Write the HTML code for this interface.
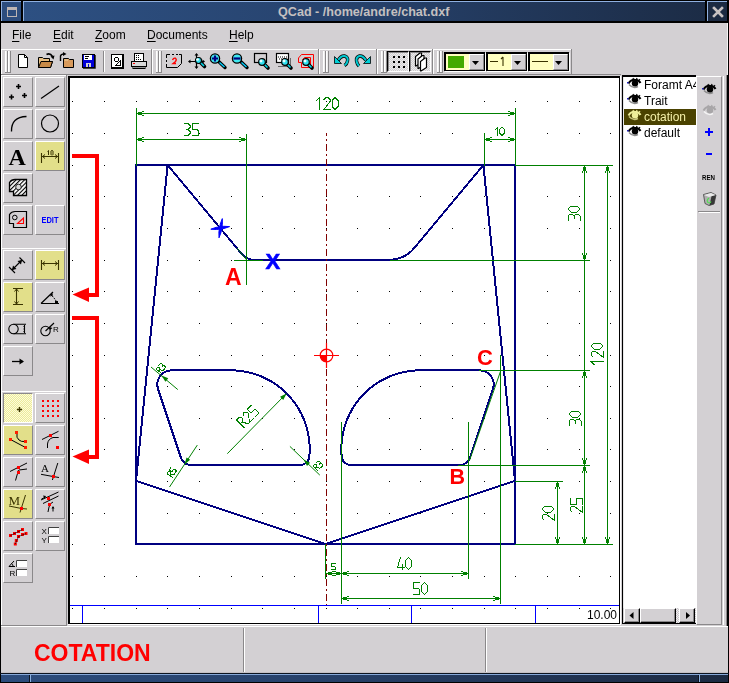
<!DOCTYPE html><html><head><meta charset="utf-8"><style>
html,body{margin:0;padding:0;width:729px;height:683px;overflow:hidden;background:#000}
body>div,body>svg{position:absolute;box-sizing:content-box}
.t{font-family:"Liberation Sans",sans-serif;color:#000;white-space:nowrap;will-change:transform}
u{text-decoration:underline;text-underline-offset:2px}
</style></head><body>
<div style="left:0px;top:0px;width:729px;height:683px;background:#000"></div>
<div style="left:1px;top:23px;width:727px;height:650px;background:#d3d0d3"></div>
<div style="left:1px;top:1px;width:20px;height:20px;background:#2c4d7e;border-top:1px solid #8fb0e0;border-left:1px solid #8fb0e0;box-sizing:border-box"></div>
<div style="left:7px;top:7px;width:10px;height:10px;box-sizing:border-box;border:1px solid #bdb6b4;border-top:3px solid #bdb6b4"></div>
<div style="left:23px;top:1px;width:682px;height:20px;box-sizing:border-box;border-top:1px solid #8fb0e0;border-left:1px solid #8fb0e0;background:linear-gradient(to right,#2d5082,#27436e 45%,#1c2c46)"></div>
<div style="left:278px;top:4px;height:16px;line-height:16px;font:bold 12.6px/16px 'Liberation Sans',sans-serif;color:#c4c0c0;white-space:nowrap">QCad - /home/andre/chat.dxf</div>
<div style="left:707px;top:1px;width:20px;height:20px;box-sizing:border-box;border-top:1px solid #8fb0e0;border-left:1px solid #8fb0e0;background:#1c2a42"></div>
<svg style="left:707px;top:1px" width="21" height="21"><path d="M7 7 L15 15 M15 7 L7 15" stroke="#c8c2c2" stroke-width="2.6" stroke-linecap="square"/></svg>
<div class="t" style="left:12px;top:28px;font-size:12px;line-height:14px"><u>F</u>ile</div>
<div class="t" style="left:53px;top:28px;font-size:12px;line-height:14px"><u>E</u>dit</div>
<div class="t" style="left:95px;top:28px;font-size:12px;line-height:14px"><u>Z</u>oom</div>
<div class="t" style="left:147px;top:28px;font-size:12px;line-height:14px"><u>D</u>ocuments</div>
<div class="t" style="left:229px;top:28px;font-size:12px;line-height:14px"><u>H</u>elp</div>
<div style="left:1px;top:74px;width:620px;height:1px;background:#8a888a"></div>
<div style="left:1px;top:49px;width:150px;height:1px;background:#fff"></div>
<div style="left:1px;top:49px;width:1px;height:25px;background:#fff"></div>
<div style="left:151px;top:49px;width:1px;height:25px;background:#8a888a"></div>
<div style="left:5px;top:51px;width:1px;height:22px;background:#fff"></div>
<div style="left:6px;top:51px;width:1px;height:22px;background:#ecebec"></div>
<div style="left:7px;top:51px;width:1px;height:22px;background:#8a888a"></div>
<div style="left:5px;top:72px;width:3px;height:1px;background:#8a888a"></div>
<div style="left:8px;top:51px;width:1px;height:22px;background:#fff"></div>
<div style="left:9px;top:51px;width:1px;height:22px;background:#ecebec"></div>
<div style="left:10px;top:51px;width:1px;height:22px;background:#8a888a"></div>
<div style="left:8px;top:72px;width:3px;height:1px;background:#8a888a"></div>
<div style="left:152px;top:49px;width:166px;height:1px;background:#fff"></div>
<div style="left:152px;top:49px;width:1px;height:25px;background:#fff"></div>
<div style="left:318px;top:49px;width:1px;height:25px;background:#8a888a"></div>
<div style="left:156px;top:51px;width:1px;height:22px;background:#fff"></div>
<div style="left:157px;top:51px;width:1px;height:22px;background:#ecebec"></div>
<div style="left:158px;top:51px;width:1px;height:22px;background:#8a888a"></div>
<div style="left:156px;top:72px;width:3px;height:1px;background:#8a888a"></div>
<div style="left:159px;top:51px;width:1px;height:22px;background:#fff"></div>
<div style="left:160px;top:51px;width:1px;height:22px;background:#ecebec"></div>
<div style="left:161px;top:51px;width:1px;height:22px;background:#8a888a"></div>
<div style="left:159px;top:72px;width:3px;height:1px;background:#8a888a"></div>
<div style="left:319px;top:49px;width:57px;height:1px;background:#fff"></div>
<div style="left:319px;top:49px;width:1px;height:25px;background:#fff"></div>
<div style="left:376px;top:49px;width:1px;height:25px;background:#8a888a"></div>
<div style="left:323px;top:51px;width:1px;height:22px;background:#fff"></div>
<div style="left:324px;top:51px;width:1px;height:22px;background:#ecebec"></div>
<div style="left:325px;top:51px;width:1px;height:22px;background:#8a888a"></div>
<div style="left:323px;top:72px;width:3px;height:1px;background:#8a888a"></div>
<div style="left:326px;top:51px;width:1px;height:22px;background:#fff"></div>
<div style="left:327px;top:51px;width:1px;height:22px;background:#ecebec"></div>
<div style="left:328px;top:51px;width:1px;height:22px;background:#8a888a"></div>
<div style="left:326px;top:72px;width:3px;height:1px;background:#8a888a"></div>
<div style="left:377px;top:49px;width:55px;height:1px;background:#fff"></div>
<div style="left:377px;top:49px;width:1px;height:25px;background:#fff"></div>
<div style="left:432px;top:49px;width:1px;height:25px;background:#8a888a"></div>
<div style="left:381px;top:51px;width:1px;height:22px;background:#fff"></div>
<div style="left:382px;top:51px;width:1px;height:22px;background:#ecebec"></div>
<div style="left:383px;top:51px;width:1px;height:22px;background:#8a888a"></div>
<div style="left:381px;top:72px;width:3px;height:1px;background:#8a888a"></div>
<div style="left:384px;top:51px;width:1px;height:22px;background:#fff"></div>
<div style="left:385px;top:51px;width:1px;height:22px;background:#ecebec"></div>
<div style="left:386px;top:51px;width:1px;height:22px;background:#8a888a"></div>
<div style="left:384px;top:72px;width:3px;height:1px;background:#8a888a"></div>
<div style="left:433px;top:49px;width:138px;height:1px;background:#fff"></div>
<div style="left:433px;top:49px;width:1px;height:25px;background:#fff"></div>
<div style="left:571px;top:49px;width:1px;height:25px;background:#8a888a"></div>
<div style="left:437px;top:51px;width:1px;height:22px;background:#fff"></div>
<div style="left:438px;top:51px;width:1px;height:22px;background:#ecebec"></div>
<div style="left:439px;top:51px;width:1px;height:22px;background:#8a888a"></div>
<div style="left:437px;top:72px;width:3px;height:1px;background:#8a888a"></div>
<div style="left:440px;top:51px;width:1px;height:22px;background:#fff"></div>
<div style="left:441px;top:51px;width:1px;height:22px;background:#ecebec"></div>
<div style="left:442px;top:51px;width:1px;height:22px;background:#8a888a"></div>
<div style="left:440px;top:72px;width:3px;height:1px;background:#8a888a"></div>
<div style="left:103px;top:51px;width:1px;height:21px;background:#8a888a"></div>
<div style="left:104px;top:51px;width:1px;height:21px;background:#fff"></div>
<div style="left:387px;top:51px;width:20px;height:19px;border-top:1px solid #000;border-left:1px solid #000;border-bottom:1px solid #fff;border-right:1px solid #fff;background-color:#dcdadc;background-image:repeating-conic-gradient(#d0ced0 0 25%, #ecebec 0 50%);background-size:2px 2px;box-shadow:inset 1px 1px 0 #8a888a"></div>
<div style="left:409px;top:51px;width:20px;height:19px;border-top:1px solid #000;border-left:1px solid #000;border-bottom:1px solid #fff;border-right:1px solid #fff;background-color:#dcdadc;background-image:repeating-conic-gradient(#d0ced0 0 25%, #ecebec 0 50%);background-size:2px 2px;box-shadow:inset 1px 1px 0 #8a888a"></div>
<div style="left:444px;top:52px;width:38px;height:16px;border-top:2px solid #000;border-left:2px solid #000;border-bottom:1px solid #000;border-right:1px solid #000;background:#ffffc0;box-shadow:1px 1px 0 #fff"></div>
<div style="left:469px;top:54px;width:13px;height:14px;border-top:1px solid #fff;border-left:1px solid #fff;border-bottom:1px solid #8a888a;border-right:1px solid #8a888a;background:#d3d0d3"></div>
<div style="left:486px;top:52px;width:38px;height:16px;border-top:2px solid #000;border-left:2px solid #000;border-bottom:1px solid #000;border-right:1px solid #000;background:#ffffc0;box-shadow:1px 1px 0 #fff"></div>
<div style="left:511px;top:54px;width:13px;height:14px;border-top:1px solid #fff;border-left:1px solid #fff;border-bottom:1px solid #8a888a;border-right:1px solid #8a888a;background:#d3d0d3"></div>
<div style="left:528px;top:52px;width:38px;height:16px;border-top:2px solid #000;border-left:2px solid #000;border-bottom:1px solid #000;border-right:1px solid #000;background:#ffffc0;box-shadow:1px 1px 0 #fff"></div>
<div style="left:553px;top:54px;width:13px;height:14px;border-top:1px solid #fff;border-left:1px solid #fff;border-bottom:1px solid #8a888a;border-right:1px solid #8a888a;background:#d3d0d3"></div>
<div style="left:1px;top:75px;width:66px;height:1px;background:#fff"></div>
<div style="left:1px;top:75px;width:1px;height:550px;background:#fff"></div>
<div style="left:66px;top:75px;width:1px;height:550px;background:#8a888a"></div>
<div style="left:1px;top:625px;width:66px;height:1px;background:#8a888a"></div>
<div style="left:2px;top:248px;width:64px;height:1px;background:#fff"></div>
<div style="left:2px;top:391px;width:64px;height:1px;background:#fff"></div>
<div style="left:3px;top:77px;width:28px;height:28px;background:#d3d0d3;border-top:1px solid #fff;border-left:1px solid #fff;border-bottom:1px solid #8a888a;border-right:1px solid #8a888a;"></div>
<div style="left:35px;top:77px;width:28px;height:28px;background:#d3d0d3;border-top:1px solid #fff;border-left:1px solid #fff;border-bottom:1px solid #8a888a;border-right:1px solid #8a888a;"></div>
<div style="left:3px;top:109px;width:28px;height:28px;background:#d3d0d3;border-top:1px solid #fff;border-left:1px solid #fff;border-bottom:1px solid #8a888a;border-right:1px solid #8a888a;"></div>
<div style="left:35px;top:109px;width:28px;height:28px;background:#d3d0d3;border-top:1px solid #fff;border-left:1px solid #fff;border-bottom:1px solid #8a888a;border-right:1px solid #8a888a;"></div>
<div style="left:3px;top:141px;width:28px;height:28px;background:#d3d0d3;border-top:1px solid #fff;border-left:1px solid #fff;border-bottom:1px solid #8a888a;border-right:1px solid #8a888a;"></div>
<div style="left:35px;top:141px;width:28px;height:28px;background:#e2df8a;border-top:1px solid #fff;border-left:1px solid #fff;border-bottom:1px solid #8a888a;border-right:1px solid #8a888a;"></div>
<div style="left:3px;top:173px;width:28px;height:28px;background:#d3d0d3;border-top:1px solid #fff;border-left:1px solid #fff;border-bottom:1px solid #8a888a;border-right:1px solid #8a888a;"></div>
<div style="left:3px;top:205px;width:28px;height:28px;background:#d3d0d3;border-top:1px solid #fff;border-left:1px solid #fff;border-bottom:1px solid #8a888a;border-right:1px solid #8a888a;"></div>
<div style="left:35px;top:205px;width:28px;height:28px;background:#d3d0d3;border-top:1px solid #fff;border-left:1px solid #fff;border-bottom:1px solid #8a888a;border-right:1px solid #8a888a;"></div>
<div style="left:3px;top:250px;width:28px;height:28px;background:#d3d0d3;border-top:1px solid #fff;border-left:1px solid #fff;border-bottom:1px solid #8a888a;border-right:1px solid #8a888a;"></div>
<div style="left:35px;top:250px;width:28px;height:28px;background:#e2df8a;border-top:1px solid #fff;border-left:1px solid #fff;border-bottom:1px solid #8a888a;border-right:1px solid #8a888a;"></div>
<div style="left:3px;top:282px;width:28px;height:28px;background:#e2df8a;border-top:1px solid #fff;border-left:1px solid #fff;border-bottom:1px solid #8a888a;border-right:1px solid #8a888a;"></div>
<div style="left:35px;top:282px;width:28px;height:28px;background:#d3d0d3;border-top:1px solid #fff;border-left:1px solid #fff;border-bottom:1px solid #8a888a;border-right:1px solid #8a888a;"></div>
<div style="left:3px;top:314px;width:28px;height:28px;background:#d3d0d3;border-top:1px solid #fff;border-left:1px solid #fff;border-bottom:1px solid #8a888a;border-right:1px solid #8a888a;"></div>
<div style="left:35px;top:314px;width:28px;height:28px;background:#d3d0d3;border-top:1px solid #fff;border-left:1px solid #fff;border-bottom:1px solid #8a888a;border-right:1px solid #8a888a;"></div>
<div style="left:3px;top:346px;width:28px;height:28px;background:#d3d0d3;border-top:1px solid #fff;border-left:1px solid #fff;border-bottom:1px solid #8a888a;border-right:1px solid #8a888a;"></div>
<div style="left:3px;top:393px;width:28px;height:28px;border-top:1px solid #8a888a;border-left:1px solid #8a888a;border-bottom:1px solid #fff;border-right:1px solid #fff;background-color:#f0eeb0;background-image:repeating-conic-gradient(#ecea9c 0 25%, #fdfdd8 0 50%);background-size:2px 2px"></div>
<div style="left:35px;top:393px;width:28px;height:28px;background:#d3d0d3;border-top:1px solid #fff;border-left:1px solid #fff;border-bottom:1px solid #8a888a;border-right:1px solid #8a888a;"></div>
<div style="left:3px;top:425px;width:28px;height:28px;background:#e2df8a;border-top:1px solid #fff;border-left:1px solid #fff;border-bottom:1px solid #8a888a;border-right:1px solid #8a888a;"></div>
<div style="left:35px;top:425px;width:28px;height:28px;background:#d3d0d3;border-top:1px solid #fff;border-left:1px solid #fff;border-bottom:1px solid #8a888a;border-right:1px solid #8a888a;"></div>
<div style="left:3px;top:457px;width:28px;height:28px;background:#d3d0d3;border-top:1px solid #fff;border-left:1px solid #fff;border-bottom:1px solid #8a888a;border-right:1px solid #8a888a;"></div>
<div style="left:35px;top:457px;width:28px;height:28px;background:#d3d0d3;border-top:1px solid #fff;border-left:1px solid #fff;border-bottom:1px solid #8a888a;border-right:1px solid #8a888a;"></div>
<div style="left:3px;top:489px;width:28px;height:28px;background:#e2df8a;border-top:1px solid #fff;border-left:1px solid #fff;border-bottom:1px solid #8a888a;border-right:1px solid #8a888a;"></div>
<div style="left:35px;top:489px;width:28px;height:28px;background:#d3d0d3;border-top:1px solid #fff;border-left:1px solid #fff;border-bottom:1px solid #8a888a;border-right:1px solid #8a888a;"></div>
<div style="left:3px;top:521px;width:28px;height:28px;background:#d3d0d3;border-top:1px solid #fff;border-left:1px solid #fff;border-bottom:1px solid #8a888a;border-right:1px solid #8a888a;"></div>
<div style="left:35px;top:521px;width:28px;height:28px;background:#d3d0d3;border-top:1px solid #fff;border-left:1px solid #fff;border-bottom:1px solid #8a888a;border-right:1px solid #8a888a;"></div>
<div style="left:3px;top:553px;width:28px;height:28px;background:#d3d0d3;border-top:1px solid #fff;border-left:1px solid #fff;border-bottom:1px solid #8a888a;border-right:1px solid #8a888a;"></div>
<div style="left:68px;top:76px;width:552px;height:548px;background:#000"></div>
<div style="left:70px;top:78px;width:549px;height:545px;background:#fff"></div>
<div style="left:620px;top:76px;width:1px;height:549px;background:#fff"></div>
<div style="left:68px;top:624px;width:553px;height:1px;background:#fff"></div>
<div style="left:622px;top:75px;width:1px;height:549px;background:#000"></div>
<div style="left:622px;top:75px;width:74px;height:2px;background:#000"></div>
<div style="left:623px;top:77px;width:73px;height:531px;background:#fff"></div>
<div style="left:623px;top:77px;width:1px;height:531px;background:#e8e8e8"></div>
<div style="left:624px;top:109px;width:72px;height:16px;background:#4a4200"></div>
<div class="t" style="left:644px;top:78px;font-size:12px;line-height:14px;color:#000;width:52px;overflow:hidden">Foramt A4</div>
<div class="t" style="left:644px;top:94px;font-size:12px;line-height:14px;color:#000;width:52px;overflow:hidden">Trait</div>
<div class="t" style="left:644px;top:110px;font-size:12px;line-height:14px;color:#f4f0a8;width:52px;overflow:hidden">cotation</div>
<div class="t" style="left:644px;top:126px;font-size:12px;line-height:14px;color:#000;width:52px;overflow:hidden">default</div>
<div style="left:624px;top:608px;width:72px;height:16px;background:#e0dde0;background-image:repeating-conic-gradient(#c8c4c8 0 25%, #f0eef0 0 50%);background-size:2px 2px"></div>
<div style="left:624px;top:608px;width:14px;height:13px;background:#d3d0d3;border-top:1px solid #fff;border-left:1px solid #fff;border-bottom:1px solid #000;border-right:1px solid #000;box-shadow:inset -1px -1px 0 #8a888a"></div>
<div style="left:640px;top:608px;width:34px;height:13px;background:#d3d0d3;border-top:1px solid #fff;border-left:1px solid #fff;border-bottom:1px solid #000;border-right:1px solid #000;box-shadow:inset -1px -1px 0 #8a888a"></div>
<div style="left:679px;top:608px;width:14px;height:13px;background:#d3d0d3;border-top:1px solid #fff;border-left:1px solid #fff;border-bottom:1px solid #000;border-right:1px solid #000;box-shadow:inset -1px -1px 0 #8a888a"></div>
<div style="left:622px;top:623px;width:74px;height:1px;background:#000"></div>
<div style="left:696px;top:76px;width:24px;height:547px;background:#d3d0d3;border-top:1px solid #fff;border-left:1px solid #fff;border-bottom:1px solid #8a888a;border-right:1px solid #8a888a;"></div>
<div style="left:698px;top:211px;width:22px;height:1px;background:#8a888a"></div>
<div style="left:699px;top:212px;width:21px;height:1px;background:#fff"></div>
<div style="left:723px;top:76px;width:1px;height:549px;background:#fff"></div>
<div style="left:726px;top:75px;width:1px;height:551px;background:#8a888a"></div>
<div style="left:727px;top:75px;width:1px;height:551px;background:#000"></div>
<div style="left:727px;top:23px;width:1px;height:52px;background:#f4f4f4"></div>
<div style="left:1px;top:626px;width:727px;height:1px;background:#fff"></div>
<div style="left:1px;top:672px;width:727px;height:1px;background:#c4c0c4"></div>
<div style="left:0px;top:673px;width:729px;height:1px;background:#0c1420"></div>
<div style="left:243px;top:628px;width:1px;height:44px;background:#8a888a"></div>
<div style="left:244px;top:628px;width:1px;height:44px;background:#fff"></div>
<div style="left:485px;top:628px;width:1px;height:44px;background:#8a888a"></div>
<div style="left:486px;top:628px;width:1px;height:44px;background:#fff"></div>
<div class="t" style="left:34px;top:640px;font:bold 23px/26px 'Liberation Sans',sans-serif;color:#ff0000">COTATION</div>
<div style="left:1px;top:674px;width:727px;height:7px;border-top:1px solid #86a8d8;background:linear-gradient(to right,#2c4c7c,#27426c 40%,#1c2a42)"></div>
<div style="left:29px;top:675px;width:1px;height:7px;background:#0c1420"></div>
<div style="left:30px;top:675px;width:1px;height:7px;background:#8ab0e0"></div>
<div style="left:698px;top:675px;width:1px;height:7px;background:#0c1420"></div>
<div style="left:699px;top:675px;width:1px;height:7px;background:#8ab0e0"></div>
<svg style="left:0;top:0;will-change:transform" width="729" height="683"><defs><clipPath id="cv"><rect x="70" y="78" width="549" height="545"/></clipPath></defs><g clip-path="url(#cv)"><path d="M72 101h1v1h-1zM72 133h1v1h-1zM72 165h1v1h-1zM72 196h1v1h-1zM72 228h1v1h-1zM72 260h1v1h-1zM72 291h1v1h-1zM72 323h1v1h-1zM72 355h1v1h-1zM72 386h1v1h-1zM72 418h1v1h-1zM72 449h1v1h-1zM72 481h1v1h-1zM72 513h1v1h-1zM72 544h1v1h-1zM72 576h1v1h-1zM72 608h1v1h-1zM104 101h1v1h-1zM104 133h1v1h-1zM104 165h1v1h-1zM104 196h1v1h-1zM104 228h1v1h-1zM104 260h1v1h-1zM104 291h1v1h-1zM104 323h1v1h-1zM104 355h1v1h-1zM104 386h1v1h-1zM104 418h1v1h-1zM104 449h1v1h-1zM104 481h1v1h-1zM104 513h1v1h-1zM104 544h1v1h-1zM104 576h1v1h-1zM104 608h1v1h-1zM136 101h1v1h-1zM136 133h1v1h-1zM136 165h1v1h-1zM136 196h1v1h-1zM136 228h1v1h-1zM136 260h1v1h-1zM136 291h1v1h-1zM136 323h1v1h-1zM136 355h1v1h-1zM136 386h1v1h-1zM136 418h1v1h-1zM136 449h1v1h-1zM136 481h1v1h-1zM136 513h1v1h-1zM136 544h1v1h-1zM136 576h1v1h-1zM136 608h1v1h-1zM167 101h1v1h-1zM167 133h1v1h-1zM167 165h1v1h-1zM167 196h1v1h-1zM167 228h1v1h-1zM167 260h1v1h-1zM167 291h1v1h-1zM167 323h1v1h-1zM167 355h1v1h-1zM167 386h1v1h-1zM167 418h1v1h-1zM167 449h1v1h-1zM167 481h1v1h-1zM167 513h1v1h-1zM167 544h1v1h-1zM167 576h1v1h-1zM167 608h1v1h-1zM199 101h1v1h-1zM199 133h1v1h-1zM199 165h1v1h-1zM199 196h1v1h-1zM199 228h1v1h-1zM199 260h1v1h-1zM199 291h1v1h-1zM199 323h1v1h-1zM199 355h1v1h-1zM199 386h1v1h-1zM199 418h1v1h-1zM199 449h1v1h-1zM199 481h1v1h-1zM199 513h1v1h-1zM199 544h1v1h-1zM199 576h1v1h-1zM199 608h1v1h-1zM231 101h1v1h-1zM231 133h1v1h-1zM231 165h1v1h-1zM231 196h1v1h-1zM231 228h1v1h-1zM231 260h1v1h-1zM231 291h1v1h-1zM231 323h1v1h-1zM231 355h1v1h-1zM231 386h1v1h-1zM231 418h1v1h-1zM231 449h1v1h-1zM231 481h1v1h-1zM231 513h1v1h-1zM231 544h1v1h-1zM231 576h1v1h-1zM231 608h1v1h-1zM262 101h1v1h-1zM262 133h1v1h-1zM262 165h1v1h-1zM262 196h1v1h-1zM262 228h1v1h-1zM262 260h1v1h-1zM262 291h1v1h-1zM262 323h1v1h-1zM262 355h1v1h-1zM262 386h1v1h-1zM262 418h1v1h-1zM262 449h1v1h-1zM262 481h1v1h-1zM262 513h1v1h-1zM262 544h1v1h-1zM262 576h1v1h-1zM262 608h1v1h-1zM294 101h1v1h-1zM294 133h1v1h-1zM294 165h1v1h-1zM294 196h1v1h-1zM294 228h1v1h-1zM294 260h1v1h-1zM294 291h1v1h-1zM294 323h1v1h-1zM294 355h1v1h-1zM294 386h1v1h-1zM294 418h1v1h-1zM294 449h1v1h-1zM294 481h1v1h-1zM294 513h1v1h-1zM294 544h1v1h-1zM294 576h1v1h-1zM294 608h1v1h-1zM326 101h1v1h-1zM326 133h1v1h-1zM326 165h1v1h-1zM326 196h1v1h-1zM326 228h1v1h-1zM326 260h1v1h-1zM326 291h1v1h-1zM326 323h1v1h-1zM326 355h1v1h-1zM326 386h1v1h-1zM326 418h1v1h-1zM326 449h1v1h-1zM326 481h1v1h-1zM326 513h1v1h-1zM326 544h1v1h-1zM326 576h1v1h-1zM326 608h1v1h-1zM357 101h1v1h-1zM357 133h1v1h-1zM357 165h1v1h-1zM357 196h1v1h-1zM357 228h1v1h-1zM357 260h1v1h-1zM357 291h1v1h-1zM357 323h1v1h-1zM357 355h1v1h-1zM357 386h1v1h-1zM357 418h1v1h-1zM357 449h1v1h-1zM357 481h1v1h-1zM357 513h1v1h-1zM357 544h1v1h-1zM357 576h1v1h-1zM357 608h1v1h-1zM389 101h1v1h-1zM389 133h1v1h-1zM389 165h1v1h-1zM389 196h1v1h-1zM389 228h1v1h-1zM389 260h1v1h-1zM389 291h1v1h-1zM389 323h1v1h-1zM389 355h1v1h-1zM389 386h1v1h-1zM389 418h1v1h-1zM389 449h1v1h-1zM389 481h1v1h-1zM389 513h1v1h-1zM389 544h1v1h-1zM389 576h1v1h-1zM389 608h1v1h-1zM420 101h1v1h-1zM420 133h1v1h-1zM420 165h1v1h-1zM420 196h1v1h-1zM420 228h1v1h-1zM420 260h1v1h-1zM420 291h1v1h-1zM420 323h1v1h-1zM420 355h1v1h-1zM420 386h1v1h-1zM420 418h1v1h-1zM420 449h1v1h-1zM420 481h1v1h-1zM420 513h1v1h-1zM420 544h1v1h-1zM420 576h1v1h-1zM420 608h1v1h-1zM452 101h1v1h-1zM452 133h1v1h-1zM452 165h1v1h-1zM452 196h1v1h-1zM452 228h1v1h-1zM452 260h1v1h-1zM452 291h1v1h-1zM452 323h1v1h-1zM452 355h1v1h-1zM452 386h1v1h-1zM452 418h1v1h-1zM452 449h1v1h-1zM452 481h1v1h-1zM452 513h1v1h-1zM452 544h1v1h-1zM452 576h1v1h-1zM452 608h1v1h-1zM484 101h1v1h-1zM484 133h1v1h-1zM484 165h1v1h-1zM484 196h1v1h-1zM484 228h1v1h-1zM484 260h1v1h-1zM484 291h1v1h-1zM484 323h1v1h-1zM484 355h1v1h-1zM484 386h1v1h-1zM484 418h1v1h-1zM484 449h1v1h-1zM484 481h1v1h-1zM484 513h1v1h-1zM484 544h1v1h-1zM484 576h1v1h-1zM484 608h1v1h-1zM515 101h1v1h-1zM515 133h1v1h-1zM515 165h1v1h-1zM515 196h1v1h-1zM515 228h1v1h-1zM515 260h1v1h-1zM515 291h1v1h-1zM515 323h1v1h-1zM515 355h1v1h-1zM515 386h1v1h-1zM515 418h1v1h-1zM515 449h1v1h-1zM515 481h1v1h-1zM515 513h1v1h-1zM515 544h1v1h-1zM515 576h1v1h-1zM515 608h1v1h-1zM547 101h1v1h-1zM547 133h1v1h-1zM547 165h1v1h-1zM547 196h1v1h-1zM547 228h1v1h-1zM547 260h1v1h-1zM547 291h1v1h-1zM547 323h1v1h-1zM547 355h1v1h-1zM547 386h1v1h-1zM547 418h1v1h-1zM547 449h1v1h-1zM547 481h1v1h-1zM547 513h1v1h-1zM547 544h1v1h-1zM547 576h1v1h-1zM547 608h1v1h-1zM579 101h1v1h-1zM579 133h1v1h-1zM579 165h1v1h-1zM579 196h1v1h-1zM579 228h1v1h-1zM579 260h1v1h-1zM579 291h1v1h-1zM579 323h1v1h-1zM579 355h1v1h-1zM579 386h1v1h-1zM579 418h1v1h-1zM579 449h1v1h-1zM579 481h1v1h-1zM579 513h1v1h-1zM579 544h1v1h-1zM579 576h1v1h-1zM579 608h1v1h-1zM610 101h1v1h-1zM610 133h1v1h-1zM610 165h1v1h-1zM610 196h1v1h-1zM610 228h1v1h-1zM610 260h1v1h-1zM610 291h1v1h-1zM610 323h1v1h-1zM610 355h1v1h-1zM610 386h1v1h-1zM610 418h1v1h-1zM610 449h1v1h-1zM610 481h1v1h-1zM610 513h1v1h-1zM610 544h1v1h-1zM610 576h1v1h-1zM610 608h1v1h-1z" fill="#000"/><g fill="#000080"><rect x="135" y="164" width="381" height="2"/><rect x="135" y="543" width="381" height="2"/><rect x="135" y="164" width="2" height="381"/><rect x="514" y="164" width="2" height="381"/></g><path d="M167.58 165.00 L241.81 254.07 L242.98 255.34 L244.29 256.47 L245.72 257.44 L247.24 258.26 L248.84 258.91 L250.51 259.38 L252.21 259.66 L253.94 259.75 L389.66 259.75 L393.11 259.56 L396.52 259.00 L399.85 258.06 L403.06 256.77 L406.10 255.14 L408.95 253.18 L411.57 250.92 L413.93 248.39 L483.41 165.00 L515.00 480.83 L325.50 544.00 L136.00 480.83 L167.58 165.00 Z" fill="none" stroke="#000080" stroke-width="2" stroke-linejoin="round" shape-rendering="crispEdges"/><path d="M158.03 389.00 L157.35 385.72 L157.46 382.36 L158.35 379.13 L159.98 376.20 L162.25 373.73 L165.03 371.85 L168.18 370.69 L171.51 370.29 L230.75 370.29 L236.21 370.48 L241.65 371.05 L247.03 371.99 L252.34 373.30 L257.54 374.98 L262.62 377.01 L267.54 379.39 L272.28 382.10 L276.83 385.14 L281.16 388.48 L285.24 392.11 L289.06 396.02 L292.61 400.18 L295.85 404.58 L298.79 409.19 L301.40 413.99 L303.67 418.96 L305.59 424.08 L307.15 429.32 L308.35 434.65 L309.17 440.06 L309.62 445.51 L309.69 450.97 L309.38 456.43 L308.88 458.71 L307.85 460.79 L306.33 462.57 L304.43 463.91 L302.26 464.76 L299.94 465.04 L191.34 465.04 L189.62 464.91 L187.95 464.51 L186.35 463.85 L184.88 462.96 L183.56 461.84 L182.44 460.54 L181.53 459.07 L180.86 457.48 L158.03 389.00" fill="none" stroke="#000080" stroke-width="2" stroke-linejoin="round" shape-rendering="crispEdges"/><path d="M492.97 389.00 L493.65 385.72 L493.54 382.36 L492.64 379.13 L491.02 376.20 L488.75 373.73 L485.96 371.85 L482.82 370.69 L479.49 370.29 L420.25 370.29 L414.78 370.48 L409.35 371.05 L403.96 371.99 L398.66 373.30 L393.45 374.98 L388.38 377.01 L383.46 379.39 L378.71 382.10 L374.17 385.14 L369.84 388.48 L365.76 392.11 L361.93 396.02 L358.39 400.18 L355.14 404.58 L352.21 409.19 L349.60 413.99 L347.33 418.96 L345.41 424.08 L343.85 429.32 L342.65 434.65 L341.83 440.06 L341.38 445.51 L341.31 450.97 L341.62 456.43 L342.11 458.71 L343.15 460.79 L344.66 462.57 L346.57 463.91 L348.74 464.76 L351.05 465.04 L459.65 465.04 L461.37 464.91 L463.05 464.51 L464.64 463.85 L466.12 462.96 L467.43 461.84 L468.56 460.54 L469.47 459.07 L470.14 457.48 L492.97 389.00" fill="none" stroke="#000080" stroke-width="2" stroke-linejoin="round" shape-rendering="crispEdges"/><rect x="136" y="108" width="1" height="58" fill="#008000"/><rect x="515" y="108" width="1" height="58" fill="#008000"/><rect x="136" y="113" width="380" height="1" fill="#008000"/><path d="M141 114h1v1h-1zM141 113h1v1h-1zM141 112h1v1h-1zM140 114h1v1h-1zM140 113h1v1h-1zM140 112h1v1h-1zM139 114h1v1h-1zM139 113h1v1h-1zM139 112h1v1h-1zM138 114h1v1h-1zM138 113h1v1h-1zM138 112h1v1h-1zM143 115h1v1h-1zM143 111h1v1h-1zM142 115h1v1h-1zM142 111h1v1h-1z" fill="#008000"/><path d="M510 112h1v1h-1zM510 113h1v1h-1zM510 114h1v1h-1zM511 112h1v1h-1zM511 113h1v1h-1zM511 114h1v1h-1zM512 112h1v1h-1zM512 113h1v1h-1zM512 114h1v1h-1zM513 112h1v1h-1zM513 113h1v1h-1zM513 114h1v1h-1zM508 111h1v1h-1zM508 115h1v1h-1zM509 111h1v1h-1zM509 115h1v1h-1z" fill="#008000"/><path d="M316.50 100.50L319.50 97.50L319.50 109.50M324.00 99.50L326.00 97.50L328.00 97.50L330.00 99.50L330.00 101.50L324.00 109.50L330.00 109.50M335.00 97.50L338.00 100.50L338.00 106.50L335.00 109.50L332.00 106.50L332.00 100.50Z" fill="none" stroke="#008000" stroke-width="1" stroke-linejoin="miter" stroke-linecap="square" shape-rendering="crispEdges"/><rect x="246" y="134" width="1" height="151" fill="#008000"/><rect x="136" y="139" width="111" height="1" fill="#008000"/><path d="M141 140h1v1h-1zM141 139h1v1h-1zM141 138h1v1h-1zM140 140h1v1h-1zM140 139h1v1h-1zM140 138h1v1h-1zM139 140h1v1h-1zM139 139h1v1h-1zM139 138h1v1h-1zM138 140h1v1h-1zM138 139h1v1h-1zM138 138h1v1h-1zM143 141h1v1h-1zM143 137h1v1h-1zM142 141h1v1h-1zM142 137h1v1h-1z" fill="#008000"/><path d="M241 138h1v1h-1zM241 139h1v1h-1zM241 140h1v1h-1zM242 138h1v1h-1zM242 139h1v1h-1zM242 140h1v1h-1zM243 138h1v1h-1zM243 139h1v1h-1zM243 140h1v1h-1zM244 138h1v1h-1zM244 139h1v1h-1zM244 140h1v1h-1zM239 137h1v1h-1zM239 141h1v1h-1zM240 137h1v1h-1zM240 141h1v1h-1z" fill="#008000"/><path d="M184.00 123.50L188.00 123.50L190.00 125.50L190.00 127.50L188.00 129.50L186.00 129.50M188.00 129.50L190.00 131.50L190.00 133.50L188.00 135.50L184.00 135.50M198.00 123.50L192.00 123.50L192.00 129.50L197.00 129.50L198.00 130.50L198.00 135.50L192.00 135.50" fill="none" stroke="#008000" stroke-width="1" stroke-linejoin="miter" stroke-linecap="square" shape-rendering="crispEdges"/><rect x="484" y="133" width="1" height="33" fill="#008000"/><rect x="484" y="139" width="32" height="1" fill="#008000"/><path d="M489 140h1v1h-1zM489 139h1v1h-1zM489 138h1v1h-1zM488 140h1v1h-1zM488 139h1v1h-1zM488 138h1v1h-1zM487 140h1v1h-1zM487 139h1v1h-1zM487 138h1v1h-1zM486 140h1v1h-1zM486 139h1v1h-1zM486 138h1v1h-1zM491 141h1v1h-1zM491 137h1v1h-1zM490 141h1v1h-1zM490 137h1v1h-1z" fill="#008000"/><path d="M510 138h1v1h-1zM510 139h1v1h-1zM510 140h1v1h-1zM511 138h1v1h-1zM511 139h1v1h-1zM511 140h1v1h-1zM512 138h1v1h-1zM512 139h1v1h-1zM512 140h1v1h-1zM513 138h1v1h-1zM513 139h1v1h-1zM513 140h1v1h-1zM508 137h1v1h-1zM508 141h1v1h-1zM509 137h1v1h-1zM509 141h1v1h-1z" fill="#008000"/><path d="M495.55 129.30L497.65 127.20L497.65 135.60M502.06 127.20L504.16 129.30L504.16 133.50L502.06 135.60L499.96 133.50L499.96 129.30Z" fill="none" stroke="#008000" stroke-width="1" stroke-linejoin="miter" stroke-linecap="square" shape-rendering="crispEdges"/><rect x="515" y="165" width="98" height="1" fill="#008000"/><rect x="390" y="260" width="200" height="1" fill="#008000"/><rect x="479" y="370" width="111" height="1" fill="#008000"/><rect x="458" y="465" width="132" height="1" fill="#008000"/><rect x="515" y="481" width="48" height="1" fill="#008000"/><rect x="515" y="544" width="98" height="1" fill="#008000"/><rect x="584" y="165" width="1" height="380" fill="#008000"/><rect x="607" y="165" width="1" height="380" fill="#008000"/><rect x="557" y="481" width="1" height="64" fill="#008000"/><path d="M583 170h1v1h-1zM584 170h1v1h-1zM585 170h1v1h-1zM583 169h1v1h-1zM584 169h1v1h-1zM585 169h1v1h-1zM583 168h1v1h-1zM584 168h1v1h-1zM585 168h1v1h-1zM583 167h1v1h-1zM584 167h1v1h-1zM585 167h1v1h-1zM582 172h1v1h-1zM586 172h1v1h-1zM582 171h1v1h-1zM586 171h1v1h-1z" fill="#008000"/><path d="M585 255h1v1h-1zM584 255h1v1h-1zM583 255h1v1h-1zM585 256h1v1h-1zM584 256h1v1h-1zM583 256h1v1h-1zM585 257h1v1h-1zM584 257h1v1h-1zM583 257h1v1h-1zM585 258h1v1h-1zM584 258h1v1h-1zM583 258h1v1h-1zM586 253h1v1h-1zM582 253h1v1h-1zM586 254h1v1h-1zM582 254h1v1h-1z" fill="#008000"/><path d="M583 375h1v1h-1zM584 375h1v1h-1zM585 375h1v1h-1zM583 374h1v1h-1zM584 374h1v1h-1zM585 374h1v1h-1zM583 373h1v1h-1zM584 373h1v1h-1zM585 373h1v1h-1zM583 372h1v1h-1zM584 372h1v1h-1zM585 372h1v1h-1zM582 377h1v1h-1zM586 377h1v1h-1zM582 376h1v1h-1zM586 376h1v1h-1z" fill="#008000"/><path d="M585 460h1v1h-1zM584 460h1v1h-1zM583 460h1v1h-1zM585 461h1v1h-1zM584 461h1v1h-1zM583 461h1v1h-1zM585 462h1v1h-1zM584 462h1v1h-1zM583 462h1v1h-1zM585 463h1v1h-1zM584 463h1v1h-1zM583 463h1v1h-1zM586 458h1v1h-1zM582 458h1v1h-1zM586 459h1v1h-1zM582 459h1v1h-1z" fill="#008000"/><path d="M583 470h1v1h-1zM584 470h1v1h-1zM585 470h1v1h-1zM583 469h1v1h-1zM584 469h1v1h-1zM585 469h1v1h-1zM583 468h1v1h-1zM584 468h1v1h-1zM585 468h1v1h-1zM583 467h1v1h-1zM584 467h1v1h-1zM585 467h1v1h-1zM582 472h1v1h-1zM586 472h1v1h-1zM582 471h1v1h-1zM586 471h1v1h-1z" fill="#008000"/><path d="M585 539h1v1h-1zM584 539h1v1h-1zM583 539h1v1h-1zM585 540h1v1h-1zM584 540h1v1h-1zM583 540h1v1h-1zM585 541h1v1h-1zM584 541h1v1h-1zM583 541h1v1h-1zM585 542h1v1h-1zM584 542h1v1h-1zM583 542h1v1h-1zM586 537h1v1h-1zM582 537h1v1h-1zM586 538h1v1h-1zM582 538h1v1h-1z" fill="#008000"/><path d="M606 170h1v1h-1zM607 170h1v1h-1zM608 170h1v1h-1zM606 169h1v1h-1zM607 169h1v1h-1zM608 169h1v1h-1zM606 168h1v1h-1zM607 168h1v1h-1zM608 168h1v1h-1zM606 167h1v1h-1zM607 167h1v1h-1zM608 167h1v1h-1zM605 172h1v1h-1zM609 172h1v1h-1zM605 171h1v1h-1zM609 171h1v1h-1z" fill="#008000"/><path d="M608 539h1v1h-1zM607 539h1v1h-1zM606 539h1v1h-1zM608 540h1v1h-1zM607 540h1v1h-1zM606 540h1v1h-1zM608 541h1v1h-1zM607 541h1v1h-1zM606 541h1v1h-1zM608 542h1v1h-1zM607 542h1v1h-1zM606 542h1v1h-1zM609 537h1v1h-1zM605 537h1v1h-1zM609 538h1v1h-1zM605 538h1v1h-1z" fill="#008000"/><path d="M556 486h1v1h-1zM557 486h1v1h-1zM558 486h1v1h-1zM556 485h1v1h-1zM557 485h1v1h-1zM558 485h1v1h-1zM556 484h1v1h-1zM557 484h1v1h-1zM558 484h1v1h-1zM556 483h1v1h-1zM557 483h1v1h-1zM558 483h1v1h-1zM555 488h1v1h-1zM559 488h1v1h-1zM555 487h1v1h-1zM559 487h1v1h-1z" fill="#008000"/><path d="M558 539h1v1h-1zM557 539h1v1h-1zM556 539h1v1h-1zM558 540h1v1h-1zM557 540h1v1h-1zM556 540h1v1h-1zM558 541h1v1h-1zM557 541h1v1h-1zM556 541h1v1h-1zM558 542h1v1h-1zM557 542h1v1h-1zM556 542h1v1h-1zM559 537h1v1h-1zM555 537h1v1h-1zM559 538h1v1h-1zM555 538h1v1h-1z" fill="#008000"/><path d="M568.00 220.00L568.00 216.00L570.00 214.00L572.00 214.00L574.00 216.00L574.00 218.00M574.00 216.00L576.00 214.00L578.00 214.00L580.00 216.00L580.00 220.00M568.00 209.00L571.00 206.00L577.00 206.00L580.00 209.00L577.00 212.00L571.00 212.00Z" fill="none" stroke="#008000" stroke-width="1" stroke-linejoin="miter" stroke-linecap="square" shape-rendering="crispEdges"/><path d="M594.00 364.50L591.00 361.50L603.00 361.50M593.00 357.00L591.00 355.00L591.00 353.00L593.00 351.00L595.00 351.00L603.00 357.00L603.00 351.00M591.00 346.00L594.00 343.00L600.00 343.00L603.00 346.00L600.00 349.00L594.00 349.00Z" fill="none" stroke="#008000" stroke-width="1" stroke-linejoin="miter" stroke-linecap="square" shape-rendering="crispEdges"/><path d="M569.00 425.00L569.00 421.00L571.00 419.00L573.00 419.00L575.00 421.00L575.00 423.00M575.00 421.00L577.00 419.00L579.00 419.00L581.00 421.00L581.00 425.00M569.00 414.00L572.00 411.00L578.00 411.00L581.00 414.00L578.00 417.00L572.00 417.00Z" fill="none" stroke="#008000" stroke-width="1" stroke-linejoin="miter" stroke-linecap="square" shape-rendering="crispEdges"/><path d="M572.00 512.00L570.00 510.00L570.00 508.00L572.00 506.00L574.00 506.00L582.00 512.00L582.00 506.00M570.00 498.00L570.00 504.00L576.00 504.00L576.00 499.00L577.00 498.00L582.00 498.00L582.00 504.00" fill="none" stroke="#008000" stroke-width="1" stroke-linejoin="miter" stroke-linecap="square" shape-rendering="crispEdges"/><path d="M544.00 520.00L542.00 518.00L542.00 516.00L544.00 514.00L546.00 514.00L554.00 520.00L554.00 514.00M542.00 509.00L545.00 506.00L551.00 506.00L554.00 509.00L551.00 512.00L545.00 512.00Z" fill="none" stroke="#008000" stroke-width="1" stroke-linejoin="miter" stroke-linecap="square" shape-rendering="crispEdges"/><rect x="325" y="544" width="1" height="35" fill="#008000"/><rect x="341" y="422" width="1" height="182" fill="#008000"/><rect x="468" y="422" width="1" height="157" fill="#008000"/><rect x="500" y="355" width="1" height="249" fill="#008000"/><rect x="326" y="573" width="16" height="1" fill="#008000"/><path d="M331 574h1v1h-1zM331 573h1v1h-1zM331 572h1v1h-1zM330 574h1v1h-1zM330 573h1v1h-1zM330 572h1v1h-1zM329 574h1v1h-1zM329 573h1v1h-1zM329 572h1v1h-1zM328 574h1v1h-1zM328 573h1v1h-1zM328 572h1v1h-1zM333 575h1v1h-1zM333 571h1v1h-1zM332 575h1v1h-1zM332 571h1v1h-1z" fill="#008000"/><path d="M336 572h1v1h-1zM336 573h1v1h-1zM336 574h1v1h-1zM337 572h1v1h-1zM337 573h1v1h-1zM337 574h1v1h-1zM338 572h1v1h-1zM338 573h1v1h-1zM338 574h1v1h-1zM339 572h1v1h-1zM339 573h1v1h-1zM339 574h1v1h-1zM334 571h1v1h-1zM334 575h1v1h-1zM335 571h1v1h-1zM335 575h1v1h-1z" fill="#008000"/><path d="M335.16 563.00L331.80 563.00L331.80 566.36L334.60 566.36L335.16 566.92L335.16 569.72L331.80 569.72" fill="none" stroke="#008000" stroke-width="1" stroke-linejoin="miter" stroke-linecap="square" shape-rendering="crispEdges"/><rect x="341" y="573" width="128" height="1" fill="#008000"/><path d="M346 574h1v1h-1zM346 573h1v1h-1zM346 572h1v1h-1zM345 574h1v1h-1zM345 573h1v1h-1zM345 572h1v1h-1zM344 574h1v1h-1zM344 573h1v1h-1zM344 572h1v1h-1zM343 574h1v1h-1zM343 573h1v1h-1zM343 572h1v1h-1zM348 575h1v1h-1zM348 571h1v1h-1zM347 575h1v1h-1zM347 571h1v1h-1z" fill="#008000"/><path d="M463 572h1v1h-1zM463 573h1v1h-1zM463 574h1v1h-1zM464 572h1v1h-1zM464 573h1v1h-1zM464 574h1v1h-1zM465 572h1v1h-1zM465 573h1v1h-1zM465 574h1v1h-1zM466 572h1v1h-1zM466 573h1v1h-1zM466 574h1v1h-1zM461 571h1v1h-1zM461 575h1v1h-1zM462 571h1v1h-1zM462 575h1v1h-1z" fill="#008000"/><path d="M400.50 557.30L397.50 567.30L404.50 567.30M402.50 564.30L402.50 569.30M408.50 557.30L411.50 560.30L411.50 566.30L408.50 569.30L405.50 566.30L405.50 560.30Z" fill="none" stroke="#008000" stroke-width="1" stroke-linejoin="miter" stroke-linecap="square" shape-rendering="crispEdges"/><rect x="341" y="598" width="160" height="1" fill="#008000"/><path d="M346 599h1v1h-1zM346 598h1v1h-1zM346 597h1v1h-1zM345 599h1v1h-1zM345 598h1v1h-1zM345 597h1v1h-1zM344 599h1v1h-1zM344 598h1v1h-1zM344 597h1v1h-1zM343 599h1v1h-1zM343 598h1v1h-1zM343 597h1v1h-1zM348 600h1v1h-1zM348 596h1v1h-1zM347 600h1v1h-1zM347 596h1v1h-1z" fill="#008000"/><path d="M495 597h1v1h-1zM495 598h1v1h-1zM495 599h1v1h-1zM496 597h1v1h-1zM496 598h1v1h-1zM496 599h1v1h-1zM497 597h1v1h-1zM497 598h1v1h-1zM497 599h1v1h-1zM498 597h1v1h-1zM498 598h1v1h-1zM498 599h1v1h-1zM493 596h1v1h-1zM493 600h1v1h-1zM494 596h1v1h-1zM494 600h1v1h-1z" fill="#008000"/><path d="M419.50 582.50L413.50 582.50L413.50 588.50L418.50 588.50L419.50 589.50L419.50 594.50L413.50 594.50M424.50 582.50L427.50 585.50L427.50 591.50L424.50 594.50L421.50 591.50L421.50 585.50Z" fill="none" stroke="#008000" stroke-width="1" stroke-linejoin="miter" stroke-linecap="square" shape-rendering="crispEdges"/><rect x="234" y="260" width="29" height="1" fill="#008000"/><path d="M237 248 L246.5 259.8" stroke="#008000" stroke-width="1"/><path d="M500.8 370.5 L469.5 460.5" stroke="#008000" stroke-width="1"/><path d="M227.3 453.7 L286.6 393.4" stroke="#008000" stroke-width="1"/><path d="M286.60 393.40 L283.21 399.91 L280.09 396.79Z" fill="#008000"/><path d="M151 367 L177.8 389.6" stroke="#008000" stroke-width="1"/><path d="M161.50 375.50 L168.27 378.32 L165.44 381.69Z" fill="#008000"/><path d="M169.5 487 L197.3 445.1" stroke="#008000" stroke-width="1"/><path d="M184.50 464.50 L186.52 457.45 L190.19 459.87Z" fill="#008000"/><path d="M289.9 446.4 L319.8 475.1" stroke="#008000" stroke-width="1"/><path d="M303.50 459.50 L310.07 462.76 L307.03 465.93Z" fill="#008000"/><path d="M244.14 427.64L236.50 420.00L239.05 417.45L241.59 417.45L242.86 418.73L242.86 421.27L240.32 423.82M242.23 421.91L247.96 423.82M243.18 415.86L243.18 413.32L244.45 412.05L247.00 412.05L248.27 413.32L249.55 422.23L253.36 418.41M251.14 405.36L247.32 409.18L251.14 413.00L254.32 409.82L255.59 409.82L258.77 413.00L254.96 416.82" fill="none" stroke="#008000" stroke-width="1" stroke-linejoin="miter" stroke-linecap="square" shape-rendering="crispEdges"/><path d="M161.16 373.12L156.00 369.00L157.37 367.28L158.92 367.11L159.78 367.79L159.95 369.34L158.58 371.06M159.61 369.77L163.22 370.53M158.74 365.56L160.12 363.84L161.66 363.67L162.52 364.35L162.70 365.90L162.01 366.76M162.70 365.90L164.24 365.72L165.10 366.41L165.28 367.95L163.90 369.67" fill="none" stroke="#008000" stroke-width="1" stroke-linejoin="miter" stroke-linecap="square" shape-rendering="crispEdges"/><path d="M172.72 477.30L167.00 474.00L168.10 472.09L169.60 471.69L170.56 472.24L170.96 473.74L169.86 475.65M170.68 474.22L174.37 474.44M170.85 467.33L169.20 470.19L172.06 471.84L173.43 469.46L174.18 469.26L176.57 470.63L174.92 473.49" fill="none" stroke="#008000" stroke-width="1" stroke-linejoin="miter" stroke-linecap="square" shape-rendering="crispEdges"/><path d="M317.67 470.67L313.00 466.00L314.56 464.44L316.11 464.44L316.89 465.22L316.89 466.78L315.33 468.33M316.50 467.17L320.00 468.33M316.11 462.89L317.67 461.33L319.22 461.33L320.00 462.11L320.00 463.67L319.22 464.44M320.00 463.67L321.56 463.67L322.33 464.44L322.33 466.00L320.78 467.56" fill="none" stroke="#008000" stroke-width="1" stroke-linejoin="miter" stroke-linecap="square" shape-rendering="crispEdges"/><path d="M326.5 133 V606" stroke="#800000" stroke-width="1" stroke-dasharray="7 3 2 3" stroke-dashoffset="4"/><circle cx="326.5" cy="355.5" r="6.3" fill="none" stroke="#f00" stroke-width="1.2"/><path d="M326.5 355.5 L320.2 355.5 A6.3 6.3 0 0 0 326.5 361.8Z" fill="#f00"/><path d="M314 355.5 H339 M326.5 343 V368" stroke="#f00" stroke-width="1.2"/><rect x="70" y="605" width="549" height="1" fill="#0000ff"/><rect x="82" y="606" width="1" height="17" fill="#0000ff"/><rect x="318" y="606" width="1" height="17" fill="#0000ff"/><rect x="411" y="606" width="1" height="17" fill="#0000ff"/><rect x="535" y="606" width="1" height="17" fill="#0000ff"/><text x="617" y="619" font-family="Liberation Sans" font-size="12" text-anchor="end" fill="#000">10.00</text><path d="M72 154 H99 V297 H88 V293 H95 V158 H72Z" fill="#f00"/><path d="M72.5 294.5 L89 287.5 V302Z" fill="#f00"/><path d="M72 316 H99 V459 H88 V455 H95 V320 H72Z" fill="#f00"/><path d="M72.5 456.5 L89 449.5 V464Z" fill="#f00"/><text x="225" y="285" font-family="Liberation Sans" font-weight="bold" font-size="23" fill="#f00">A</text><text x="449.5" y="484.3" font-family="Liberation Sans" font-weight="bold" font-size="21.5" fill="#f00">B</text><text x="477" y="364.5" font-family="Liberation Sans" font-weight="bold" font-size="22" fill="#f00">C</text><text x="265.5" y="268.5" font-family="Liberation Sans" font-weight="bold" font-size="22" fill="#00f" stroke="#00f" stroke-width="0.6">X</text><path d="M210.80 229.20 L216.59 229.51 L224.11 228.47 L229.60 226.60 L223.81 226.29 L216.29 227.33Z M222.30 218.60 L220.23 224.17 L218.91 231.85 L219.00 237.80 L221.07 232.23 L222.39 224.55Z" fill="#00f" stroke="#00f" stroke-width="1" stroke-linejoin="round"/></g><path d="M18.5 54.5 H24.5 L27.5 57.5 V67.5 H18.5 Z" fill="#fff" stroke="#000" stroke-width="1"/><path d="M24.5 54.5 V57.5 H27.5" fill="none" stroke="#000" stroke-width="1"/><path d="M38.5 57.5 H42.5 L43.5 58.5 H49.5 V61.5 H52.5 L50.5 67.5 H38.5 Z" fill="#e8c084" stroke="#000"/><path d="M41 61.5 H52.5 L50.5 67.5 H38.5 Z" fill="#c88a48" stroke="#000"/><path d="M46.5 54.5 Q50 52.5 52.5 56.5" fill="none" stroke="#000" stroke-width="1.6"/><path d="M50.5 56.5 L54.5 55.5 L53.5 59.5 Z" fill="#000"/><path d="M63.5 58.5 H68.5 L69.5 59.5 H73.5 V67.5 H63.5 Z" fill="#d89a5c" stroke="#000"/><path d="M64.5 59.5 H68 V60.5 H64.5Z" fill="#f0d8a8"/><path d="M60.5 61 V56 Q61 54 64 54" fill="none" stroke="#000" stroke-width="1.4"/><path d="M63 52 L66.5 54 L63 56 Z" fill="#000"/><rect x="82.5" y="54.5" width="12" height="13" fill="#0000d8" stroke="#000"/><rect x="84" y="55" width="8" height="5" fill="#fff"/><path d="M85 56.5 H89 M85 58.5 H88" stroke="#000"/><rect x="86" y="63" width="5" height="4" fill="#d0d0d0"/><rect x="88" y="64" width="1" height="3" fill="#0000d8"/><path d="M95.5 55 V68.5 H83" stroke="#404040" fill="none"/><rect x="111" y="54" width="13" height="15" fill="#000"/><rect x="112" y="55" width="10" height="12" fill="#fff"/><path d="M115.5 57.5 H117.5 L118.5 58.5 V60.5 L117.5 61.5 H115.5 L114.5 60.5 V58.5Z" fill="none" stroke="#000" shape-rendering="crispEdges"/><path d="M115.5 65.5 L120.5 60.5 V65.5 Z" fill="none" stroke="#000" shape-rendering="crispEdges"/><rect x="134.5" y="53.5" width="9" height="8" fill="#fff" stroke="#000" shape-rendering="crispEdges"/><path d="M136 55h1v1h-1z M138 55h1v1h-1z M136 57h1v1h-1z M138 57h1v1h-1z M136 59h1v1h-1z M138 59h1v1h-1z M140 59h1v1h-1z" fill="#000"/><rect x="131.5" y="61.5" width="15" height="5" fill="#d8d8d8" stroke="#000"/><rect x="133" y="63" width="2" height="1" fill="#f00"/><rect x="132.5" y="67" width="13" height="2" fill="#000"/><rect x="133" y="67" width="12" height="1" fill="#909090"/><path d="M166.5 58 V54.5 H170 M172 54.5 H174 M176 54.5 H178" stroke="#000" fill="none"/><path d="M166.5 60 V62 M166.5 64 V67.5 H177.5 L181.5 63.5 V54.5 H179" stroke="#000" fill="none"/><path d="M172.5 60 Q173.5 57.5 175.5 58.2 Q177 59.5 175.5 61.5 L173 63.5 H176" stroke="#f00" stroke-width="1.3" fill="none"/><path d="M196.5 54 V68 M189 61.5 H204" stroke="#000" stroke-width="1.2"/><path d="M196.5 53 L194.5 55.5 H198.5Z M196.5 69 L194.5 66.5 H198.5Z M188 61.5 L190.5 59.5 V63.5Z M205 61.5 L202.5 59.5 V63.5Z" fill="#000"/><path d="M200.0 62.0 L204.5 66.5" stroke="#000" stroke-width="3.6" stroke-linecap="round"/><path d="M200.5 62.5 L204.0 66.0" stroke="#00d8e8" stroke-width="1.6"/><circle cx="198.5" cy="60.5" r="3" fill="#30e0f0" stroke="#000" stroke-width="1.2"/><circle cx="197.5" cy="59.5" r="1.35" fill="#e8ffff"/><path d="M215 58 L225 67.5" stroke="#000" stroke-width="3.4" stroke-linecap="round"/><path d="M219.5 62.5 L224.5 67" stroke="#00d0ff" stroke-width="1.4"/><circle cx="215" cy="58.5" r="4.6" fill="#40e8f0" stroke="#000" stroke-width="1.3"/><path d="M215 55.5 V61.5 M212 58.5 H218" stroke="#000080" stroke-width="2.2"/><path d="M237 58 L247 67.5" stroke="#000" stroke-width="3.4" stroke-linecap="round"/><path d="M241.5 62.5 L246.5 67" stroke="#00d0ff" stroke-width="1.4"/><circle cx="237" cy="58.5" r="4.6" fill="#40e8f0" stroke="#000" stroke-width="1.3"/><path d="M233.5 58.5 H240.5" stroke="#000080" stroke-width="2.2"/><rect x="254.5" y="53.5" width="12" height="9" fill="none" stroke="#000" stroke-width="1.2"/><path d="M263.5 63.5 L268 68" stroke="#000" stroke-width="3.6" stroke-linecap="round"/><path d="M264 64 L267.5 67.5" stroke="#00d8e8" stroke-width="1.6"/><circle cx="262" cy="62" r="3.3" fill="#30e0f0" stroke="#000" stroke-width="1.2"/><circle cx="261" cy="61" r="1.4849999999999999" fill="#e8ffff"/><rect x="276.5" y="53.5" width="12" height="9" fill="#fff" stroke="#000" stroke-width="1.2"/><path d="M278 57 H288 M279 59 H287" stroke="#000" stroke-dasharray="1 1"/><path d="M278.5 66.5 H290.5 V58" stroke="#000" stroke-dasharray="1 1" fill="none"/><path d="M286.5 63.5 L291 68" stroke="#000" stroke-width="3.6" stroke-linecap="round"/><path d="M287 64 L290.5 67.5" stroke="#00d8e8" stroke-width="1.6"/><circle cx="285" cy="62" r="3.3" fill="#30e0f0" stroke="#000" stroke-width="1.2"/><circle cx="284" cy="61" r="1.4849999999999999" fill="#e8ffff"/><path d="M298.5 58 L301.5 54.5 H313.5 V67.5 H301.5 V62.5 H298.5Z" fill="none" stroke="#f00"/><path d="M302.5 60 L304.5 57.5 H310.5 V64.5 H304.5 V61.5Z" fill="none" stroke="#f00"/><path d="M307.5 63.5 L312 68" stroke="#000" stroke-width="3.6" stroke-linecap="round"/><path d="M308 64 L311.5 67.5" stroke="#00d8e8" stroke-width="1.6"/><circle cx="306" cy="62" r="3.3" fill="#30e0f0" stroke="#000" stroke-width="1.2"/><circle cx="305" cy="61" r="1.4849999999999999" fill="#e8ffff"/><path d="M338 60.5 Q341 55.5 344.5 56 Q348.5 57 347.5 61 Q347 64 344.5 65.5" fill="none" stroke="#000" stroke-width="3.4"/><path d="M338 60.5 Q341 55.5 344.5 56 Q348.5 57 347.5 61 Q347 64 344.5 65.5" fill="none" stroke="#00c8d0" stroke-width="2"/><path d="M334.5 56.5 L341.5 63.5 H334.5Z" fill="#00d0d8" stroke="#000" stroke-width="0.8"/><path d="M366 60.5 Q363 55.5 359.5 56 Q356 57 356.5 61 Q357 64 359 66" fill="none" stroke="#000" stroke-width="3.4"/><path d="M366 60.5 Q363 55.5 359.5 56 Q356 57 356.5 61 Q357 64 359 66" fill="none" stroke="#00c8d0" stroke-width="2"/><path d="M370.5 56.5 L363.5 63.5 H370.5Z" fill="#00d0d8" stroke="#000" stroke-width="0.8"/><rect x="393" y="56" width="2" height="2" fill="#000"/><rect x="393" y="61" width="2" height="2" fill="#000"/><rect x="393" y="66" width="2" height="2" fill="#000"/><rect x="398" y="56" width="2" height="2" fill="#000"/><rect x="398" y="61" width="2" height="2" fill="#000"/><rect x="398" y="66" width="2" height="2" fill="#000"/><rect x="403" y="56" width="2" height="2" fill="#000"/><rect x="403" y="61" width="2" height="2" fill="#000"/><rect x="403" y="66" width="2" height="2" fill="#000"/><path d="M415.5 56.5 L420.0 53.0 H421.5 V62.5 L416.0 66.0 H415.5Z" fill="#fff" stroke="#000" stroke-width="1.2" stroke-linejoin="round"/><path d="M418.0 59.0 L422.5 55.5 H424.0 V65.0 L418.5 68.5 H418.0Z" fill="#fff" stroke="#000" stroke-width="1.2" stroke-linejoin="round"/><path d="M420.5 61.5 L425.0 58.0 H426.5 V67.5 L421.0 71.0 H420.5Z" fill="#fff" stroke="#000" stroke-width="1.2" stroke-linejoin="round"/><path d="M472.0 61 H479.0 L475.5 65Z" fill="#000"/><path d="M514.0 61 H521.0 L517.5 65Z" fill="#000"/><path d="M555.0 61 H562.0 L558.5 65Z" fill="#000"/><rect x="448" y="56" width="16" height="12" fill="#44aa00"/><path d="M490 61.5 H498" stroke="#3a3400" stroke-width="1"/><path d="M503 57 V66 M501 59 L503 57" stroke="#3a3400" stroke-width="1.1" fill="none"/><path d="M532 61.5 H548" stroke="#3a3400" stroke-width="1"/><path d="M16.0 86.5 H21.0 M18.5 84.0 V89.0" stroke="#000" stroke-width="1.6"/><path d="M9.0 97 H14.0 M11.5 94.5 V99.5" stroke="#000" stroke-width="1.6"/><path d="M22.0 95.5 H27.0 M24.5 93.0 V98.0" stroke="#000" stroke-width="1.6"/><path d="M41 98.5 L59 86" stroke="#000" stroke-width="1.2"/><path d="M11.5 131.5 Q11 117 26.5 116.5" fill="none" stroke="#000" stroke-width="1.3"/><circle cx="50" cy="123.5" r="8.5" fill="none" stroke="#000" stroke-width="1.2"/><text x="8.5" y="164.5" font-family="Liberation Serif" font-weight="bold" font-size="24" fill="#000">A</text><path d="M41.5 153 V163 M58.5 153 V163 M42 156.5 H58" stroke="#3a3400" stroke-width="1.1" fill="none"/><path d="M45 154.5 L42.5 156.5 L45 158.5 M55 154.5 L57.5 156.5 L55 158.5" stroke="#3a3400" fill="none"/><path d="M47.5 151.5 L48.5 150.5 V155 M51.5 150.5 H52.5 L53 151 V154.5 L52.5 155 H51.5 L51 154.5 V151Z" fill="none" stroke="#3a3400" stroke-width="1"/><defs><pattern id="hp" width="3" height="3" patternUnits="userSpaceOnUse" patternTransform="rotate(45)"><rect width="1.1" height="3" fill="#000"/></pattern><clipPath id="hc"><path d="M10 186 V182 Q12 180 15 180 H27 V196 H14 V191 H10Z"/></clipPath></defs><path d="M9.5 187.5 V182.5 Q11.5 179.5 15 179.5 H26.5 V195.5 H13.5 V191.5 H9.5Z" fill="#fff" stroke="#000" stroke-width="1.3"/><rect x="9" y="179" width="19" height="18" fill="url(#hp)" clip-path="url(#hc)"/><circle cx="18.5" cy="187" r="2.8" fill="#d8d8d8" stroke="#000" stroke-width="0.8"/><path d="M9.5 218.5 V214.5 Q11.5 211.5 15 211.5 H26.5 V227.5 H13.5 V223.5 H9.5Z" fill="none" stroke="#000" stroke-width="1.2"/><circle cx="14.8" cy="217.5" r="2.3" fill="none" stroke="#000" stroke-width="1"/><path d="M17.5 223.5 L23.5 218 V223.5Z" fill="none" stroke="#f00" stroke-width="1.1"/><text x="50" y="223" font-family="Liberation Sans" font-weight="bold" font-size="9" text-anchor="middle" fill="#0000ff" textLength="17" lengthAdjust="spacingAndGlyphs">EDIT</text><path d="M9 267 L15 273 M19.5 257.5 L25 263 M12.5 269.5 L21.5 260.5" stroke="#000" stroke-width="1.1" fill="none"/><path d="M12 270 L13 265.5 L16.5 269Z M22 260 L21 264.5 L17.5 261Z" fill="#000"/><path d="M41.5 260 V270 M58.5 260 V270 M42 263.5 H58" stroke="#3a3400" stroke-width="1.1" fill="none"/><path d="M45 261.5 L42.5 263.5 L45 265.5 M55 261.5 L57.5 263.5 L55 265.5" stroke="#3a3400" fill="none"/><path d="M13 288.5 H23 M13 304.5 H23 M16.5 289 V304" stroke="#3a3400" stroke-width="1.1" fill="none"/><path d="M14.5 291.5 L16.5 289 L18.5 291.5 M14.5 301.5 L16.5 304 L18.5 301.5" stroke="#3a3400" fill="none"/><path d="M41 303.5 H59 M41 303.5 L53 292" stroke="#000" stroke-width="1.2" fill="none"/><path d="M50.5 294 L54 298 L56.5 301.5" stroke="#000" stroke-dasharray="1.5 1" fill="none"/><path d="M52 292.5 L50 296.5 L53 295.5Z" fill="#000"/><rect x="55" y="301" width="3" height="2" fill="#000"/><circle cx="13.5" cy="329" r="4.7" fill="none" stroke="#000" stroke-width="1.1"/><path d="M13.5 324.3 H26 M13.5 333.7 H26 M24.5 325 V333" stroke="#000" stroke-width="1.1" fill="none"/><path d="M24 326 V332" stroke="#000" stroke-dasharray="1 1.5"/><circle cx="45.5" cy="331" r="4.7" fill="none" stroke="#000" stroke-width="1.1"/><path d="M45.5 331 L54 323" stroke="#000" stroke-width="1.1"/><path d="M49.5 327 L50 330 L52.5 328Z" fill="#000"/><text x="53" y="332" font-family="Liberation Sans" font-size="8" fill="#000">R</text><path d="M12 361.5 H23" stroke="#000" stroke-width="1.3"/><path d="M19.5 358.5 L24 361.5 L19.5 364.5Z" fill="#000"/><path d="M16.9 409.5 H22.1 M19.5 406.9 V412.1" stroke="#3a3400" stroke-width="1.4"/><rect x="42" y="400" width="2" height="2" fill="#f00"/><rect x="42" y="405" width="2" height="2" fill="#f00"/><rect x="42" y="410" width="2" height="2" fill="#f00"/><rect x="42" y="415" width="2" height="2" fill="#f00"/><rect x="47" y="400" width="2" height="2" fill="#f00"/><rect x="47" y="405" width="2" height="2" fill="#f00"/><rect x="47" y="410" width="2" height="2" fill="#f00"/><rect x="47" y="415" width="2" height="2" fill="#f00"/><rect x="52" y="400" width="2" height="2" fill="#f00"/><rect x="52" y="405" width="2" height="2" fill="#f00"/><rect x="52" y="410" width="2" height="2" fill="#f00"/><rect x="52" y="415" width="2" height="2" fill="#f00"/><rect x="57" y="400" width="2" height="2" fill="#f00"/><rect x="57" y="405" width="2" height="2" fill="#f00"/><rect x="57" y="410" width="2" height="2" fill="#f00"/><rect x="57" y="415" width="2" height="2" fill="#f00"/><path d="M17 433 Q16 438 19 440 Q21 442 25.5 441.5 M10.5 439.5 L25.5 447.5" stroke="#000" stroke-width="1" fill="none"/><rect x="15.0" y="431.0" width="3" height="3" fill="#ff2000"/><rect x="9.0" y="438.0" width="3" height="3" fill="#ff2000"/><rect x="24.0" y="440.0" width="3" height="3" fill="#ff2000"/><rect x="24.0" y="446.0" width="3" height="3" fill="#ff2000"/><path d="M42 439.5 L58.5 431.3 M47.5 448 V444 Q48 439 53 437.5 H58.7" stroke="#000" stroke-width="1" fill="none"/><rect x="49" y="434" width="3" height="3" fill="#f00"/><rect x="56" y="446" width="3" height="3" fill="#f00"/><path d="M10 471.5 L27 463 M19 470 L27 469 M15.5 480.5 L18.5 470" stroke="#000" stroke-width="1" fill="none"/><rect x="17" y="466" width="3" height="3" fill="#f00"/><rect x="17" y="471" width="3" height="3" fill="#f00"/><text x="41" y="471.5" font-family="Liberation Serif" font-size="11" fill="#000">A</text><path d="M41 474.3 L53 476.5 L59 477.5 M57.8 463 L52.4 480" stroke="#000" stroke-width="1" fill="none"/><rect x="52" y="475" width="3" height="3" fill="#f00"/><text x="8.5" y="504.5" font-family="Liberation Serif" font-size="13" fill="#3a3400">M</text><path d="M9 506 L21.5 508.5 L27 509 M25.5 495 L20 512.5" stroke="#3a3400" stroke-width="1" fill="none"/><rect x="20" y="507" width="3" height="3" fill="#f00"/><path d="M41 500 L58.5 492 M43 503.5 L58.5 496 M48 512 L49 507 Q50 503 53 502 M53 511.5 L53 507 M41.5 499 L45.5 497" stroke="#000" stroke-width="1" fill="none"/><path d="M46 496 L43 495.5 L44.5 498.5Z M53 506 L51.5 508.5 H54.5Z" fill="#000"/><rect x="47" y="497" width="3" height="3" fill="#f00"/><rect x="48" y="503" width="3" height="3" fill="#f00"/><rect x="9.0" y="534.0" width="3" height="3" fill="#f00"/><rect x="13.0" y="532.0" width="3" height="3" fill="#f00"/><rect x="17.0" y="530.0" width="3" height="3" fill="#f00"/><rect x="21.0" y="528.0" width="3" height="3" fill="#f00"/><rect x="24.5" y="532.0" width="3" height="3" fill="#f00"/><rect x="21.0" y="533.0" width="3" height="3" fill="#f00"/><rect x="17.0" y="535.0" width="3" height="3" fill="#f00"/><rect x="14.8" y="539.0" width="3" height="3" fill="#f00"/><rect x="13.8" y="542.5" width="3" height="3" fill="#f00"/><path d="M10.5 535.5 L22.5 529.5 M26 533.5 L18.5 536.5 L15.3 544" stroke="#000" stroke-width="0.6" fill="none"/><text x="41.5" y="533.5" font-family="Liberation Sans" font-size="8" fill="#000">X</text><text x="41.5" y="542.5" font-family="Liberation Sans" font-size="8" fill="#000">Y</text><rect x="48" y="527" width="11" height="7" fill="#fff"/><path d="M48.5 534 V527.5 H59" stroke="#404040" fill="none"/><rect x="48" y="536" width="11" height="7" fill="#fff"/><path d="M48.5 543 V536.5 H59" stroke="#404040" fill="none"/><path d="M9 566.5 H15 M9 566.5 L14 561" stroke="#000" stroke-width="1" fill="none"/><path d="M11.5 563.5 Q13 564.5 13 566" stroke="#000" fill="none"/><text x="9.5" y="576" font-family="Liberation Sans" font-size="8" fill="#000">R</text><rect x="16" y="560" width="11" height="7" fill="#fff"/><path d="M16.5 567 V560.5 H27" stroke="#404040" fill="none"/><rect x="16" y="569" width="11" height="7" fill="#fff"/><path d="M16.5 576 V569.5 H27" stroke="#404040" fill="none"/><path d="M628.5 83.5 Q631 79.5 635 79.8 Q639 80 640.5 83" fill="none" stroke="#000" stroke-width="2"/><path d="M629 84.5 Q633 89 638 86.5" fill="none" stroke="#8c8c8c" stroke-width="1.5"/><circle cx="635" cy="83.3" r="3.2" fill="#000"/><path d="M633.5 79.5 L633 78  M636.5 79.5 L637 78 M639 80.5 L640 79.2" stroke="#000" stroke-width="1.2"/><rect x="627" y="82" width="1.5" height="1.5" fill="#2020c0"/><path d="M628.5 99.5 Q631 95.5 635 95.8 Q639 96 640.5 99" fill="none" stroke="#000" stroke-width="2"/><path d="M629 100.5 Q633 105 638 102.5" fill="none" stroke="#8c8c8c" stroke-width="1.5"/><circle cx="635" cy="99.3" r="3.2" fill="#000"/><path d="M633.5 95.5 L633 94  M636.5 95.5 L637 94 M639 96.5 L640 95.2" stroke="#000" stroke-width="1.2"/><rect x="627" y="98" width="1.5" height="1.5" fill="#2020c0"/><path d="M628.5 131.5 Q631 127.5 635 127.8 Q639 128 640.5 131" fill="none" stroke="#000" stroke-width="2"/><path d="M629 132.5 Q633 137 638 134.5" fill="none" stroke="#8c8c8c" stroke-width="1.5"/><circle cx="635" cy="131.3" r="3.2" fill="#000"/><path d="M633.5 127.5 L633 126  M636.5 127.5 L637 126 M639 128.5 L640 127.2" stroke="#000" stroke-width="1.2"/><rect x="627" y="130" width="1.5" height="1.5" fill="#2020c0"/><path d="M628.5 115.5 Q631 111.5 635 111.8 Q639 112 640.5 115" fill="none" stroke="#eeee9a" stroke-width="2"/><path d="M629 116.5 Q633 121 638 118.5" fill="none" stroke="#c8c47c" stroke-width="1.5"/><circle cx="635" cy="115.3" r="3.2" fill="#eeee9a"/><path d="M633.5 111.5 L633 110  M636.5 111.5 L637 110 M639 112.5 L640 111.2" stroke="#eeee9a" stroke-width="1.2"/><path d="M703.5 89.5 Q706 85.5 710 85.8 Q714 86 715.5 89" fill="none" stroke="#000" stroke-width="2"/><path d="M704 90.5 Q708 95 713 92.5" fill="none" stroke="#8c8c8c" stroke-width="1.5"/><circle cx="710" cy="89.3" r="3.2" fill="#000"/><path d="M708.5 85.5 L708 84  M711.5 85.5 L712 84 M714 86.5 L715 85.2" stroke="#000" stroke-width="1.2"/><rect x="702" y="88" width="1.5" height="1.5" fill="#2020c0"/><path d="M703.5 110.5 Q706 106.5 710 106.8 Q714 107 715.5 110" fill="none" stroke="#a8a6a8" stroke-width="2"/><path d="M704 111.5 Q708 116 713 113.5" fill="none" stroke="#f4f4f4" stroke-width="1.5"/><circle cx="710" cy="110.3" r="3.2" fill="#a8a6a8"/><path d="M708.5 106.5 L708 105  M711.5 106.5 L712 105 M714 107.5 L715 106.2" stroke="#a8a6a8" stroke-width="1.2"/><path d="M705 132 H713 M709 128 V136" stroke="#0000ff" stroke-width="2"/><rect x="706" y="153" width="6" height="2" fill="#0000ff"/><text x="708.5" y="179.5" font-family="Liberation Sans" font-weight="bold" font-size="7.5" text-anchor="middle" fill="#000" textLength="13" lengthAdjust="spacingAndGlyphs">REN</text><path d="M703.5 194.5 L711 192.5 L716 195 L714 204 L709 205.5 L705 203.5Z" fill="#b0b0b0" stroke="#404040" stroke-width="0.8"/><path d="M711.5 196 L716 195 L714 204 L709.5 205.5Z" fill="#383838"/><path d="M704 195 L711 193 L715.5 195 L709 197Z" fill="#e8e8e8"/><path d="M709 198 Q706 200.5 708 202.5 Q710 203.5 711 201.5" fill="none" stroke="#50e050" stroke-width="1.1"/><path d="M629.5 615.5 L633.5 612 V619Z" fill="#000"/><path d="M690 615.5 L686 612 V619Z" fill="#000"/></svg>
</body></html>
